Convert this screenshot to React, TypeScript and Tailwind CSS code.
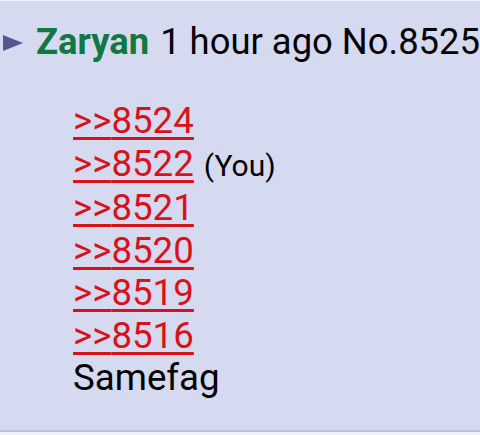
export default function App() {
  const quotes = ["8524", "8522", "8521", "8520", "8519", "8516"];
  return (
    <div className="w-[480px] h-[435px] bg-[#eef2ff] pt-px font-['Roboto',sans-serif] overflow-hidden">
      <div className="h-[431px] bg-[#d6daf0] border-b-2 border-[#b7c5d9]">
        <div className="flex items-center pl-[3px] pt-[19px] text-[36.4px] leading-[44px] whitespace-nowrap text-black">
          <svg width="20" height="16" viewBox="0 0 20 16" className="mr-[13px] mt-[2px] shrink-0">
            <path d="M0 0 L20 8 L0 16 Z" fill="#55588c" />
          </svg>
          <span className="font-bold text-[#117743] mr-[11px]">Zaryan</span>
          <span>1 hour ago No.8525</span>
        </div>
        <div className="pl-[73px] pt-[36px] text-[36.7px] leading-[42.5px] text-black">
          {quotes.map((q) => (
            <div key={q} className="flex items-baseline">
              <a className="text-[#d8121b] underline decoration-[3px] underline-offset-[4px]">
                &gt;&gt;{q}
              </a>
              {q === "8522" && <span className="ml-[10px] text-[30px]">(You)</span>}
            </div>
          ))}
          <div>Samefag</div>
        </div>
      </div>
    </div>
  );
}
